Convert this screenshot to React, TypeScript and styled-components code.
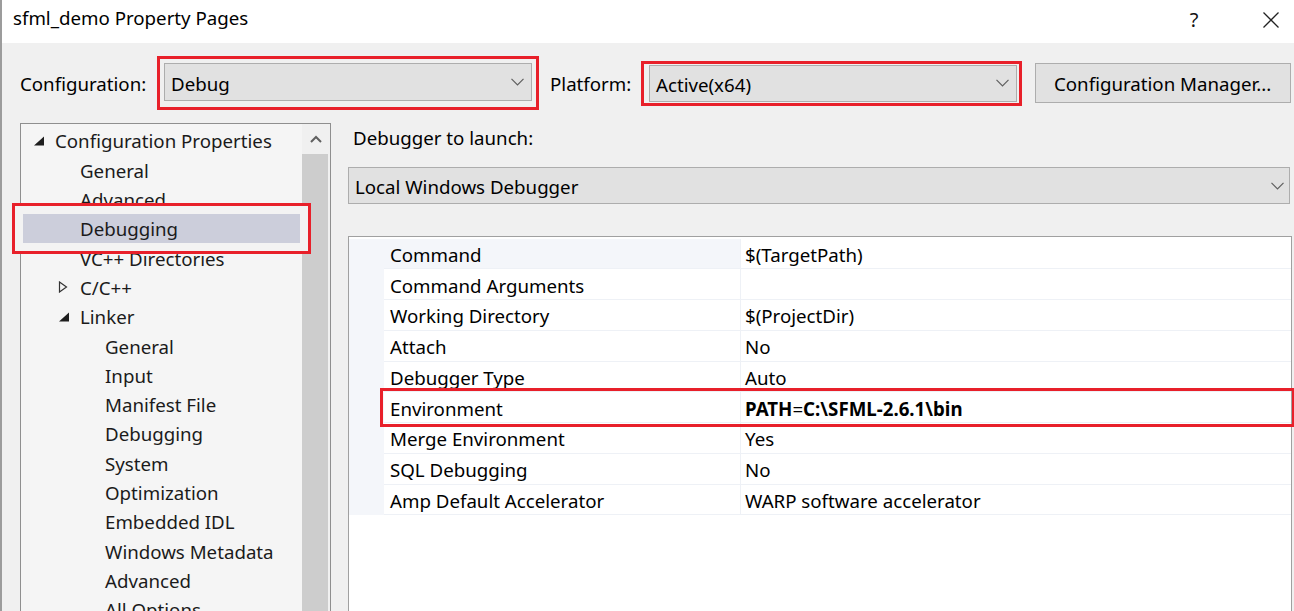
import React from 'react'
import styled, { createGlobalStyle, css } from 'styled-components'

const GlobalStyle = createGlobalStyle`
  html, body { margin: 0; padding: 0; overflow: hidden; background: #f0f0f0; }
  body { font-family: "Noto Sans", "Open Sans", sans-serif; color: #1b1b1b; }
  * { box-sizing: border-box; }
`

const RED = '#e8202a'
const FS = '18.7px'

const Window = styled.div`
  width: 1294px;
  height: 611px;
  border-left: 2px solid #9c9c9c;
  background: #f0f0f0;
  display: flex;
  flex-direction: column;
  overflow: hidden;
`

// TITLE BAR
const TitleBar = styled.div`
  height: 43px;
  flex: none;
  background: #fff;
  display: flex;
  align-items: center;
  padding-left: 11px;
`

const Title = styled.div`
  flex: 1;
  font-size: ${FS};
  color: #000;
  padding-bottom: 8px;
`

const TitleButton = styled.div<{ $gap?: number }>`
  width: 46px;
  height: 36px;
  display: flex;
  align-items: center;
  justify-content: center;
  font-size: 20px;
  color: #111;
  margin-right: ${p => p.$gap ?? 0}px;
  padding-bottom: 4px;
`

// BODY
const Body = styled.div`
  flex: 1;
  display: flex;
  flex-direction: column;
  padding: 0 2px 0 18px;
  min-height: 0;
`

const TopRow = styled.div`
  margin-top: 13px;
  height: 54px;
  display: flex;
  align-items: center;
  flex: none;
`

const FieldLabel = styled.div<{ $w: number; $ml?: number }>`
  width: ${p => p.$w}px;
  margin-left: ${p => p.$ml ?? 0}px;
  font-size: ${FS};
  color: #000;
  white-space: nowrap;
  padding-top: 1px;
`

const RedFrame = styled.div<{ $w: number; $pad: string }>`
  width: ${p => p.$w}px;
  border: 3px solid ${RED};
  padding: ${p => p.$pad};
  flex: none;
`

const Combo = styled.div<{ $h: number }>`
  height: ${p => p.$h}px;
  background: #e1e1e1;
  border: 1px solid #adadad;
  display: flex;
  align-items: center;
  padding: 0 7px 0 6px;
  font-size: ${FS};
  color: #000;
  span { flex: 1; padding-top: 2px; white-space: nowrap; }
`

const Button = styled.div`
  margin-left: 13px;
  width: 256px;
  height: 40px;
  background: #e1e1e1;
  border: 1px solid #adadad;
  display: flex;
  align-items: center;
  padding-left: 18px;
  font-size: ${FS};
  color: #000;
  white-space: nowrap;
`

const Main = styled.div`
  margin-top: 13px;
  height: 520px;
  flex: none;
  display: flex;
  gap: 17px;
`

// TREE
const Tree = styled.div`
  width: 311px;
  flex: none;
  border: 1px solid #8f8f8f;
  background: #f5f5f5;
  display: flex;
`

const TreeList = styled.div`
  flex: 1;
  padding: 2.3px 2px 0 2px;
`

const TreeRow = styled.div<{ $level: number; $selected?: boolean }>`
  height: 29.3px;
  display: flex;
  align-items: center;
  padding-left: ${p => 10 + p.$level * 25}px;
  font-size: ${FS};
  color: #1b1b1b;
  white-space: nowrap;
  ${p => p.$selected && css`
    position: relative;
    z-index: 1;
    background: #cccedb;
    box-shadow: 0 0 0 8px #f3f3f3, 0 0 0 11px ${RED};
  `}
`

const Expander = styled.div`
  width: 22px;
  flex: none;
  display: flex;
  align-items: center;
  svg { display: block; }
`

const Scrollbar = styled.div`
  width: 28px;
  flex: none;
  background: #f0f0f0;
  display: flex;
  flex-direction: column;
`

const ScrollArrow = styled.div`
  height: 30px;
  display: flex;
  align-items: center;
  justify-content: center;
`

const ScrollThumb = styled.div`
  flex: 1;
  margin-right: 2px;
  background: #cdcdcd;
`

// RIGHT PANEL
const Panel = styled.div`
  flex: 1;
  display: flex;
  flex-direction: column;
  min-width: 0;
`

const PanelLabel = styled.div`
  height: 29px;
  display: flex;
  align-items: center;
  padding: 0 0 1px 5px;
  font-size: ${FS};
  color: #000;
`

const WideCombo = styled(Combo)`
  margin-top: 15px;
  margin-right: 2px;
  padding-right: 5px;
`

const Grid = styled.div`
  margin-top: 32px;
  flex: 1;
  border: 1px solid #a0a0a0;
  background: #fff;
  padding-top: 1.5px;
`

const GridRow = styled.div`
  height: 30.75px;
  display: flex;
`

const Gutter = styled.div`
  width: 35px;
  flex: none;
  background: #f4f6fa;
`

const Cells = styled.div<{ $marked?: boolean }>`
  flex: 1;
  display: flex;
  ${p => p.$marked && css`
    position: relative;
    z-index: 1;
    outline: 3px solid ${RED};
    outline-offset: 1px;
  `}
`

const NameCell = styled.div<{ $active?: boolean }>`
  width: 356px;
  flex: none;
  display: flex;
  align-items: center;
  padding: 2px 0 0 6px;
  font-size: ${FS};
  color: #000;
  white-space: nowrap;
  border-bottom: 1px solid #eef1f6;
  background: ${p => (p.$active ? '#f4f6fa' : '#fff')};
`

const ValueCell = styled.div`
  flex: 1;
  display: flex;
  align-items: center;
  padding: 2px 0 0 4px;
  font-size: ${FS};
  color: #000;
  white-space: nowrap;
  border-left: 1px solid #eef1f6;
  border-bottom: 1px solid #eef1f6;
  b { font-weight: 700; }
`

const Chevron = () => (
  <svg width="13" height="8" viewBox="0 0 13 8">
    <polyline points="0.5,0.8 6.5,6.8 12.5,0.8" fill="none" stroke="#5f5f5f" strokeWidth="1.2" />
  </svg>
)

const Collapse = () => (
  <svg width="12" height="10" viewBox="0 0 12 10">
    <polygon points="11,0.5 11,9.5 1,9.5" fill="#1e1e1e" />
  </svg>
)

const Expand = () => (
  <svg width="10" height="12" viewBox="0 0 10 12">
    <polygon points="1.5,1 8.5,6 1.5,11" fill="none" stroke="#333" strokeWidth="1.2" />
  </svg>
)

type Node = { label: string; level: number; icon?: 'open' | 'closed'; selected?: boolean }

const tree: Node[] = [
  { label: 'Configuration Properties', level: 0, icon: 'open' },
  { label: 'General', level: 1 },
  { label: 'Advanced', level: 1 },
  { label: 'Debugging', level: 1, selected: true },
  { label: 'VC++ Directories', level: 1 },
  { label: 'C/C++', level: 1, icon: 'closed' },
  { label: 'Linker', level: 1, icon: 'open' },
  { label: 'General', level: 2 },
  { label: 'Input', level: 2 },
  { label: 'Manifest File', level: 2 },
  { label: 'Debugging', level: 2 },
  { label: 'System', level: 2 },
  { label: 'Optimization', level: 2 },
  { label: 'Embedded IDL', level: 2 },
  { label: 'Windows Metadata', level: 2 },
  { label: 'Advanced', level: 2 },
  { label: 'All Options', level: 2 },
]

type Prop = { name: string; value: React.ReactNode; marked?: boolean }

const props: Prop[] = [
  { name: 'Command', value: '$(TargetPath)' },
  { name: 'Command Arguments', value: '' },
  { name: 'Working Directory', value: '$(ProjectDir)' },
  { name: 'Attach', value: 'No' },
  { name: 'Debugger Type', value: 'Auto' },
  { name: 'Environment', value: <><b>PATH</b>=<b>C:\SFML-2.6.1\bin</b></>, marked: true },
  { name: 'Merge Environment', value: 'Yes' },
  { name: 'SQL Debugging', value: 'No' },
  { name: 'Amp Default Accelerator', value: 'WARP software accelerator' },
]

export default function App() {
  return (
    <>
      <GlobalStyle />
      <Window>
        <TitleBar>
          <Title>sfml_demo Property Pages</Title>
          <TitleButton $gap={31}>?</TitleButton>
          <TitleButton>
            <svg width="18" height="18" viewBox="0 0 18 18">
              <path d="M1.5 1.5 L16.5 16.5 M16.5 1.5 L1.5 16.5" stroke="#222" strokeWidth="1.3" />
            </svg>
          </TitleButton>
        </TitleBar>

        <Body>
          <TopRow>
            <FieldLabel $w={137}>Configuration:</FieldLabel>
            <RedFrame $w={382} $pad="4px 4px 6px 4px">
              <Combo $h={38}>
                <span>Debug</span>
                <Chevron />
              </Combo>
            </RedFrame>
            <FieldLabel $w={91} $ml={11}>Platform:</FieldLabel>
            <RedFrame $w={381} $pad="1px 2px 1px 5px">
              <Combo $h={37}>
                <span>Active(x64)</span>
                <Chevron />
              </Combo>
            </RedFrame>
            <Button>Configuration Manager...</Button>
          </TopRow>

          <Main>
            <Tree>
              <TreeList>
                {tree.map((n, i) => (
                  <TreeRow key={i} $level={n.level} $selected={n.selected}>
                    <Expander>
                      {n.icon === 'open' && <Collapse />}
                      {n.icon === 'closed' && <Expand />}
                    </Expander>
                    <span>{n.label}</span>
                  </TreeRow>
                ))}
              </TreeList>
              <Scrollbar>
                <ScrollArrow>
                  <svg width="12" height="8" viewBox="0 0 12 8">
                    <polyline points="1,7 6,2 11,7" fill="none" stroke="#606060" strokeWidth="2" />
                  </svg>
                </ScrollArrow>
                <ScrollThumb />
              </Scrollbar>
            </Tree>

            <Panel>
              <PanelLabel>Debugger to launch:</PanelLabel>
              <WideCombo $h={37}>
                <span>Local Windows Debugger</span>
                <Chevron />
              </WideCombo>
              <Grid>
                {props.map((p, i) => (
                  <GridRow key={i}>
                    <Gutter />
                    <Cells $marked={p.marked}>
                      <NameCell $active={i === 0}>{p.name}</NameCell>
                      <ValueCell>{p.value}</ValueCell>
                    </Cells>
                  </GridRow>
                ))}
              </Grid>
            </Panel>
          </Main>
        </Body>
      </Window>
    </>
  )
}
